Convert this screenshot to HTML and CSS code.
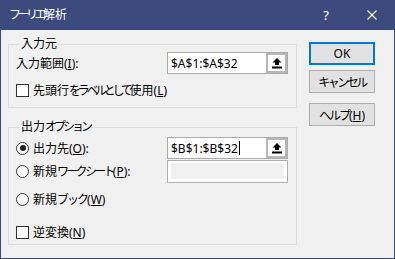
FILE: index.html
```html
<!DOCTYPE html>
<html lang="ja">
<head>
    <meta charset="UTF-8">
    <meta name="viewport" content="width=device-width, initial-scale=1.0">
    <title>フーリエ解析</title>
    <link rel="stylesheet" href="styles.css">
</head>
<body>

<div class="window">
  <div class="titlebar">
    <span class="title"><span class="kana k35">フーリエ</span>解析</span>
    <span class="tb-btn help">?</span>
    <span class="tb-btn close">
      <svg width="10" height="10" viewBox="0 0 10 10"><path d="M0.5 0.5 L9.5 9.5 M9.5 0.5 L0.5 9.5" stroke="#fff" stroke-width="1.1" fill="none"/></svg>
    </span>
  </div>

  <div class="content">
    <div class="groups">

      <fieldset class="group g-input">
        <legend>入力元</legend>
        <div class="row r-field">
          <span class="lbl">入力範囲(<u>I</u>):</span>
          <div class="refedit">
            <span class="val">$A$1:$A$32</span>
            <span class="pick">
              <svg width="12" height="12" viewBox="0 0 12 12"><path d="M6 1 L10.5 5.5 L8 5.5 L8 8 L4 8 L4 5.5 L1.5 5.5 Z" fill="#000"/><rect x="1" y="9.5" width="10" height="2" fill="#000"/></svg>
            </span>
          </div>
        </div>
        <div class="row r-check first-check">
          <span class="check"></span>
          <span class="opt">先頭行<span class="kana k33">をラベルとして</span>使用(<u>L</u>)</span>
        </div>
      </fieldset>

      <fieldset class="group g-output">
        <legend>出力<span class="kana k30">オプション</span></legend>
        <div class="row r-field">
          <span class="lbl"><span class="radio on"></span>出力先(<u>O</u>):</span>
          <div class="refedit">
            <span class="val">$B$1:$B$32<span class="caret"></span></span>
            <span class="pick">
              <svg width="12" height="12" viewBox="0 0 12 12"><path d="M6 1 L10.5 5.5 L8 5.5 L8 8 L4 8 L4 5.5 L1.5 5.5 Z" fill="#000"/><rect x="1" y="9.5" width="10" height="2" fill="#000"/></svg>
            </span>
          </div>
        </div>
        <div class="row r-field r-sheet">
          <span class="lbl"><span class="radio"></span>新規<span class="kana k27">ワークシート</span>(<u>P</u>):</span>
          <div class="disabled-box"><div class="disabled-fill"></div></div>
        </div>
        <div class="row r-check r-book">
          <span class="radio"></span>
          <span class="opt">新規<span class="kana k20">ブック</span>(<u>W</u>)</span>
        </div>
        <div class="row r-check r-inverse">
          <span class="check"></span>
          <span class="opt">逆変換(<u>N</u>)</span>
        </div>
      </fieldset>

    </div>

    <div class="buttons">
      <button class="btn default" type="button">OK</button>
      <button class="btn" type="button"><span class="kana k25">キャンセル</span></button>
      <button class="btn help-btn" type="button"><span class="kana k20">ヘルプ</span>(<u>H</u>)</button>
    </div>
  </div>
</div>

</body>
</html>
```

FILE: styles.css
```css
body {
  margin: 0;
  font-family: "Noto Sans", "Noto Sans CJK JP", sans-serif;
  font-size: 12px;
  color: #000;
  background: #f0f0f0;
}

/* kana runs are set tighter, like the proportional UI font */
.kana.k20 { letter-spacing: -2px; }
.kana.k25 { letter-spacing: -2.5px; }
.kana.k27 { letter-spacing: -2.7px; }
.kana.k30 { letter-spacing: -3px; }
.kana.k33 { letter-spacing: -3.3px; }
.kana.k35 { letter-spacing: -3.5px; }

.window {
  width: 393px;
  height: 257px;
  border: 1px solid #3c4a7c;
  background: #f0f0f0;
  display: flex;
  flex-direction: column;
}

.titlebar {
  height: 29px;
  background: #3c4a7c;
  color: #fff;
  display: flex;
  align-items: center;
  padding-left: 8px;
}

.title {
  flex: 1;
  line-height: 14px;
  margin-top: -1px;
}

.tb-btn {
  width: 46px;
  height: 29px;
  display: flex;
  align-items: center;
  justify-content: center;
}

.tb-btn.help {
  font-size: 13px;
  margin-top: -1px;
}

.tb-btn.close {
  margin-right: -1px;
  padding-bottom: 1px;
}

.content {
  display: flex;
  align-items: flex-start;
  padding-left: 7px;
}

.groups {
  width: 289px;
}

/* group boxes */
fieldset.group {
  box-sizing: border-box;
  width: 289px;
  margin: 0;
  border: 1px solid #dcdcdc;
  padding: 0 8px 0 7px;
}

fieldset.group legend {
  padding: 0 1px;
  margin-left: 4px;
  line-height: 14px;
  height: 14px;
}

.g-input {
  margin-top: 7px !important;
  padding-bottom: 9px !important;
}

.g-output {
  margin-top: 12px !important;
  padding-bottom: 4px !important;
}

.row {
  display: flex;
  align-items: center;
}

.r-field {
  height: 22px;
}

.g-input .r-field {
  margin-top: 1px;
}

.g-output .r-field {
  margin-top: 3px;
}

.g-output .r-sheet {
  margin-top: 1px;
}

.r-check {
  height: 16px;
}

.first-check {
  margin-top: 8px;
}

.r-book {
  margin-top: 9px;
}

.r-inverse {
  margin-top: 17px;
}

.lbl {
  width: 151px;
  display: flex;
  align-items: center;
  white-space: nowrap;
}

.opt {
  white-space: nowrap;
}

u {
  text-underline-offset: 1px;
}

/* boxes */
.check {
  width: 11px;
  height: 11px;
  border: 1px solid #333;
  background: #fff;
  margin-right: 4px;
  flex: none;
}

.radio {
  width: 11px;
  height: 11px;
  border: 1px solid #333;
  border-radius: 50%;
  background: #fff;
  margin-right: 4px;
  flex: none;
  display: inline-flex;
  align-items: center;
  justify-content: center;
}

.radio.on::after {
  content: "";
  width: 6px;
  height: 6px;
  border-radius: 50%;
  background: #222;
}

/* range reference field */
.refedit {
  box-sizing: border-box;
  width: 121px;
  height: 22px;
  border: 1px solid #a9a9a9;
  background: #fff;
  display: flex;
  align-items: center;
}

.val {
  flex: 1;
  padding-left: 3px;
  display: flex;
  align-items: center;
  white-space: nowrap;
}

.caret {
  display: inline-block;
  width: 1px;
  height: 14px;
  background: #000;
  margin-left: 1px;
}

.pick {
  box-sizing: border-box;
  width: 21px;
  height: 20px;
  border: 2px solid #b7b7b7;
  background: #fff;
  display: flex;
  align-items: center;
  justify-content: center;
}

.disabled-box {
  box-sizing: border-box;
  width: 121px;
  height: 23px;
  border: 1px solid #adadad;
  background: #fff;
  padding: 2px 3px 3px 3px;
}

.disabled-fill {
  height: 100%;
  background: #f0f0f0;
}

/* dialog buttons */
.buttons {
  margin-left: 12px;
  display: flex;
  flex-direction: column;
}

.btn {
  box-sizing: border-box;
  width: 66px;
  height: 23px;
  margin: 0;
  padding: 0;
  font-family: inherit;
  font-size: 12px;
  color: #000;
  background: #e1e1e1;
  border: 1px solid #adadad;
}

.btn.default {
  margin-top: 12px;
  border: 2px solid #0078d7;
}

.btn + .btn {
  margin-top: 5px;
}

.btn.help-btn {
  margin-top: 10px;
}
```
